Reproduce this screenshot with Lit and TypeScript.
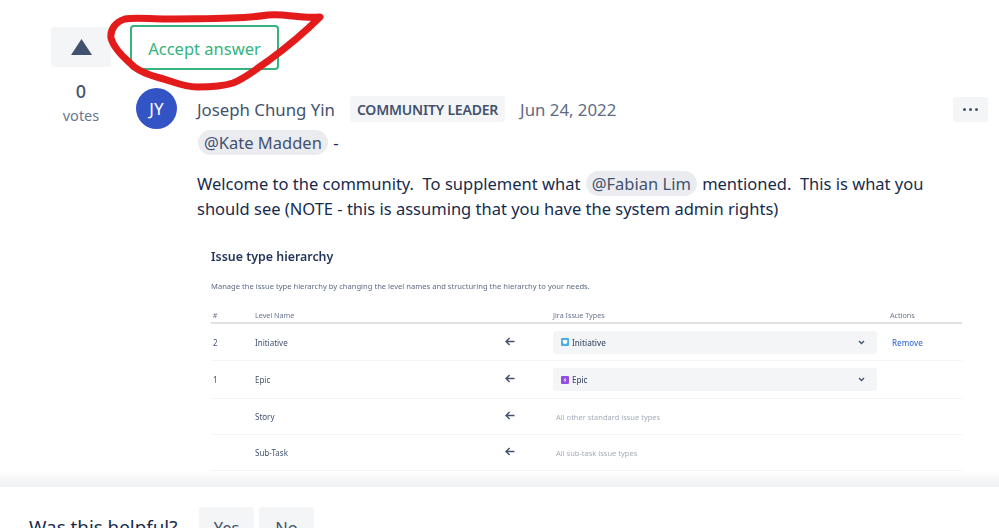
import { LitElement, html, css, svg } from "lit"
import { customElement } from "lit/decorators.js"

const arrow = svg`<svg class="arrow" width="10" height="9" viewBox="0 0 10 9"><path d="M9.5 4.5H1.2M4.6 1 1 4.5 4.6 8" fill="none" stroke="#42526e" stroke-width="1.4"/></svg>`
const chevron = svg`<svg class="chev" width="7" height="5" viewBox="0 0 7 5"><path d="M1 1l2.5 2.5L6 1" fill="none" stroke="#42526e" stroke-width="1.3"/></svg>`
const initiative = svg`<svg width="8" height="8" viewBox="0 0 8 8"><rect width="8" height="8" rx="1" fill="#4bade8"/><path d="M1.8 2h4.4v3L4 6.2 1.8 5z" fill="#fff"/></svg>`
const epic = svg`<svg width="8" height="8" viewBox="0 0 8 8"><rect width="8" height="8" rx="1" fill="#904ee2"/><path d="M4.6 1.6 2.5 4.3h1.3l-.4 2.1 2.1-2.7H4.2z" fill="#fff"/></svg>`

@customElement("app-root")
export class AppRoot extends LitElement {
  static styles = css`
    :host {
      display: block;
      position: relative;
      width: 999px;
      height: 528px;
      overflow: hidden;
      background: #fff;
      font-family: "Noto Sans", "Open Sans", sans-serif;
      color: #172b4d;
    }
    .page {
      height: 487px;
      box-sizing: border-box;
      padding: 25px 11px 0 51px;
      display: grid;
      grid-template-columns: 60px 1fr;
      column-gap: 19px;
      grid-template-rows: 44px 1fr;
      background: linear-gradient(to bottom, #fff 470px, #f0f1f2 487px);
    }
    .vote-btn {
      margin-top: 2px;
      height: 40px;
      background: #f4f5f7;
      border-radius: 3px;
      display: flex;
      align-items: center;
      justify-content: center;
    }
    .accept {
      box-sizing: border-box;
      width: 149px;
      height: 45px;
      border: 2px solid #36b37e;
      border-radius: 4px;
      color: #36b37e;
      font-size: 16.5px;
      display: flex;
      align-items: center;
      justify-content: center;
      padding-top: 2px;
    }
    .votes {
      text-align: center;
      color: #6b778c;
      font-size: 14.5px;
      padding-top: 9px;
    }
    .votes b {
      display: block;
      color: #42526e;
      font-size: 18px;
      font-weight: 500;
      line-height: 27px;
    }
    .post {
      display: grid;
      grid-template-columns: 41px 1fr;
      column-gap: 20px;
      margin-left: 6px;
      padding-top: 19px;
    }
    .avatar {
      width: 41px;
      height: 41px;
      border-radius: 50%;
      background: #3354c4;
      color: #fff;
      font-size: 17px;
      display: flex;
      align-items: center;
      justify-content: center;
    }
    .head {
      display: flex;
      align-items: center;
      height: 26px;
      margin-top: 8px;
      font-size: 16.8px;
      color: #42526e;
    }
    .badge {
      margin-left: 15px;
      background: #f4f5f7;
      border-radius: 3px;
      height: 26px;
      padding: 0 7px;
      display: flex;
      align-items: center;
      font-size: 14px;
      font-weight: 600;
      letter-spacing: -0.2px;
    }
    .date {
      margin-left: 15px;
      color: #5e6c84;
    }
    .more {
      margin-left: auto;
      width: 35px;
      height: 25px;
      border-radius: 3px;
      background: #f4f5f7;
      display: flex;
      align-items: center;
      justify-content: center;
      gap: 3px;
    }
    .more i {
      width: 3px;
      height: 3px;
      border-radius: 50%;
      background: #42526e;
    }
    .text {
      font-size: 16.5px;
      line-height: 25px;
    }
    .mention {
      display: inline-block;
      background: #ebecf0;
      color: #42526e;
      border-radius: 13px;
      padding: 0 6px;
      margin: 0 1px;
    }
    .lead {
      margin: 8px 0 0 0;
    }
    .body {
      margin: 16px 0 0 0;
      width: 760px;
    }
    figure {
      margin: 27px 0 0 14px;
      width: 751px;
      font-size: 8px;
      color: #5e6c84;
      filter: blur(0.4px);
    }
    h2 {
      margin: 0;
      font-size: 12.4px;
      line-height: 18px;
      font-weight: 600;
      color: #253858;
    }
    .sub {
      margin-top: 14px;
      font-size: 7.6px;
      line-height: 12px;
      color: #5e6c84;
    }
    .row {
      display: grid;
      grid-template-columns: 44px 1fr 44px 337px 72px;
      align-items: center;
      border-bottom: 1px solid #f4f5f7;
      height: 37px;
      box-sizing: border-box;
      color: #42526e;
    }
    .row.tall {
      height: 38px;
    }
    .row.short {
      height: 36px;
    }
    .row.top {
      height: 12px;
      margin-top: 18px;
      border-bottom: 2px solid #dfe1e6;
      color: #6b778c;
      font-size: 7.2px;
      align-items: start;
      box-sizing: content-box;
    }
    .arrow {
      margin: -2px 0 0 -4px;
    }
    .select {
      width: 324px;
      height: 23px;
      box-sizing: border-box;
      background: #f4f5f7;
      border-radius: 3px;
      padding: 0 12px 0 8px;
      display: flex;
      align-items: center;
      gap: 3px;
      font-weight: 500;
    }
    .chev {
      margin-left: auto;
    }
    .muted {
      color: #a5adba;
      padding-left: 3px;
      font-size: 7.5px;
    }
    .link {
      color: #3b73d9;
      font-weight: 500;
      padding-left: 2px;
    }
    .footer {
      display: flex;
      height: 41px;
      padding: 20px 0 0 29px;
      background: #fff;
      color: #172b4d;
      font-size: 18.8px;
    }
    .footer span {
      width: 170px;
      padding-top: 7px;
      line-height: 26px;
    }
    .footer button {
      width: 55px;
      height: 40px;
      margin-right: 5px;
      border: 0;
      border-radius: 3px;
      background: #f4f5f7;
      color: #42526e;
      font: inherit;
      font-size: 16.5px;
    }
    .scribble {
      position: absolute;
      left: 0;
      top: 0;
      pointer-events: none;
    }
  `

  render() {
    return html`
      <div class="page">
        <div class="vote-btn">
          <svg width="21" height="16" viewBox="0 0 21 16"><path d="M10.5 0 21 16H0z" fill="#42526e"/></svg>
        </div>
        <div class="accept">Accept answer</div>
        <div class="votes"><b>0</b>votes</div>
        <div class="post">
          <div class="avatar">JY</div>
          <div>
            <div class="head">
              <span>Joseph Chung Yin</span>
              <span class="badge">COMMUNITY LEADER</span>
              <span class="date">Jun 24, 2022</span>
              <span class="more"><i></i><i></i><i></i></span>
            </div>
            <div class="text lead"><span class="mention">@Kate Madden</span> -</div>
            <p class="text body">
              Welcome to the community.&nbsp; To supplement what
              <span class="mention">@Fabian Lim</span> mentioned.&nbsp; This is what you
              should see (NOTE - this is assuming that you have the system admin rights)
            </p>
            <figure>
              <h2>Issue type hierarchy</h2>
              <div class="sub">Manage the issue type hierarchy by changing the level names and structuring the hierarchy to your needs.</div>
              <div class="row top"><span>&nbsp;#</span><span>Level Name</span><span></span><span>Jira Issue Types</span><span>Actions</span></div>
              <div class="row">
                <span>&nbsp;2</span><span>Initiative</span>${arrow}
                <div class="select">${initiative}Initiative ${chevron}</div>
                <span class="link">Remove</span>
              </div>
              <div class="row tall">
                <span>&nbsp;1</span><span>Epic</span>${arrow}
                <div class="select">${epic}Epic ${chevron}</div>
                <span></span>
              </div>
              <div class="row short"><span></span><span>Story</span>${arrow}<span class="muted">All other standard issue types</span><span></span></div>
              <div class="row short"><span></span><span>Sub-Task</span>${arrow}<span class="muted">All sub-task issue types</span><span></span></div>
            </figure>
          </div>
        </div>
      </div>
      <div class="footer">
        <span>Was this helpful?</span>
        <button>Yes</button>
        <button>No</button>
      </div>
      <svg class="scribble" width="999" height="528" viewBox="0 0 999 528">
        <path
          d="M320 17C300 19 285 13 268 15C235 20 200 18 167 19C150 19 135 17 125 19C115 22 110 30 111 38C113 46 122 56 130 63C136 70 145 74 160 78C172 81 183 87 197 87C210 87 224 86 233 83C246 78 256 69 268 61C283 50 305 32 320 17Z"
          fill="none" stroke="#e31b1b" stroke-width="7" stroke-linejoin="round"/>
      </svg>
    `
  }
}
